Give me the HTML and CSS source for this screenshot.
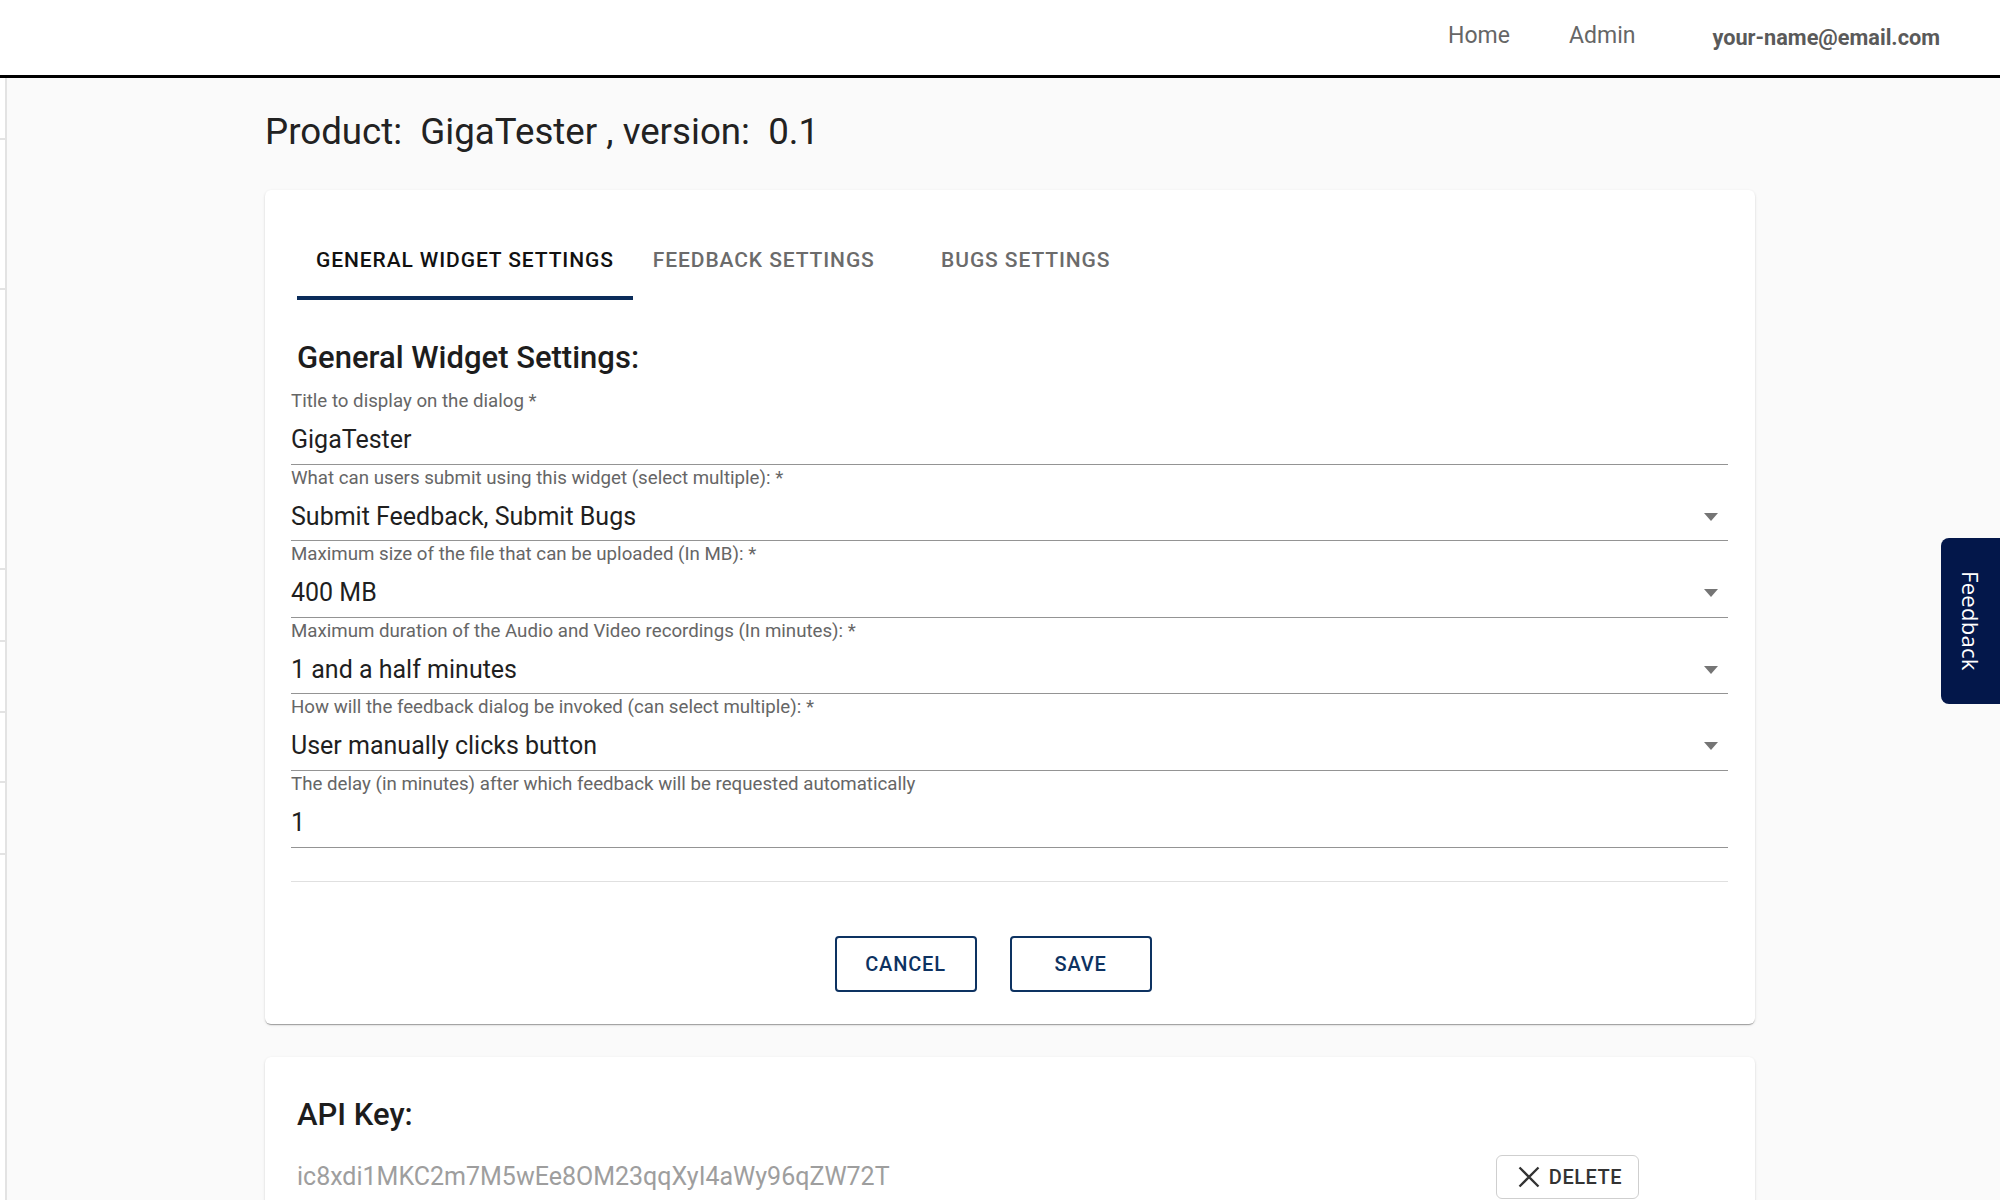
FILE: index.html
```html
<!DOCTYPE html>
<html lang="en">
<head>
<meta charset="utf-8">
<title>GigaTester - Product Settings</title>
<link rel="stylesheet" href="styles.css">
</head>
<body>
<header class="topbar">
  <nav class="nav">
    <a class="nav-link nav-home" href="#">Home</a>
    <a class="nav-link nav-admin" href="#">Admin</a>
    <span class="nav-user">your-name@email.com</span>
  </nav>
</header>
<div class="layout">
  <aside class="drawer">
    <div class="drawer-item d1"></div>
    <div class="drawer-item d2"></div>
    <div class="drawer-item d3"></div>
    <div class="drawer-item d4"></div>
    <div class="drawer-item d5"></div>
    <div class="drawer-item d6"></div>
    <div class="drawer-item d7"></div>
  </aside>
  <main class="main">
    <h1 class="page-title">Product:  GigaTester , version:  0.1</h1>
    <section class="card settings-card">
      <div class="tabs">
        <div class="tab tab-general active">General Widget Settings</div>
        <div class="tab tab-feedback">Feedback Settings</div>
        <div class="tab tab-bugs">Bugs Settings</div>
      </div>
      <h2 class="section-title">General Widget Settings:</h2>
      <div class="field">
        <div class="field-label">Title to display on the dialog *</div>
        <div class="field-value">GigaTester</div>
      </div>
      <div class="field select">
        <div class="field-label">What can users submit using this widget (select multiple): *</div>
        <div class="field-value">Submit Feedback, Submit Bugs<span class="caret"></span></div>
      </div>
      <div class="field select">
        <div class="field-label">Maximum size of the file that can be uploaded (In MB): *</div>
        <div class="field-value">400 MB<span class="caret"></span></div>
      </div>
      <div class="field select">
        <div class="field-label">Maximum duration of the Audio and Video recordings (In minutes): *</div>
        <div class="field-value">1 and a half minutes<span class="caret"></span></div>
      </div>
      <div class="field select">
        <div class="field-label">How will the feedback dialog be invoked (can select multiple): *</div>
        <div class="field-value">User manually clicks button<span class="caret"></span></div>
      </div>
      <div class="field">
        <div class="field-label">The delay (in minutes) after which feedback will be requested automatically</div>
        <div class="field-value">1</div>
      </div>
      <hr class="divider">
      <div class="actions">
        <button class="btn-outline">Cancel</button>
        <button class="btn-outline">Save</button>
      </div>
    </section>
    <section class="card api-card">
      <h2 class="api-title">API Key:</h2>
      <div class="api-row">
        <span class="api-key">ic8xdi1MKC2m7M5wEe8OM23qqXyI4aWy96qZW72T</span>
        <button class="btn-delete">
          <svg class="x-icon" viewBox="0 0 24 24" width="24" height="24"><path d="M2.5 2.5 L21.5 21.5 M21.5 2.5 L2.5 21.5" stroke="#333" stroke-width="2.3" fill="none"/></svg>
          <span>Delete</span>
        </button>
      </div>
    </section>
  </main>
</div>
<div class="feedback-tab"><span>Feedback</span></div>
</body>
</html>
```

FILE: styles.css
```css
* { box-sizing: border-box; }

html, body {
  margin: 0;
  padding: 0;
  background: #fafafa;
  font-family: Roboto, "Liberation Sans", Arial, sans-serif;
  color: rgba(0, 0, 0, 0.87);
}

.topbar {
  height: 78px;
  background: #ffffff;
  border-bottom: 3px solid #000000;
  display: flex;
  align-items: center;
  justify-content: flex-end;
}

.nav {
  display: flex;
  align-items: center;
  padding-right: 60px;
}

.nav-link {
  font-size: 23px;
  color: #666666;
  text-decoration: none;
  margin-bottom: 4px;
}

.nav-admin { margin-left: 59px; }

.nav-user {
  margin-left: 77px;
  font-size: 21.7px;
  font-weight: 700;
  color: #5a5a5a;
}

.layout {
  display: flex;
  align-items: flex-start;
}

.drawer {
  width: 7px;
  flex: none;
  background: #ffffff;
  border-right: 2px solid #e3e3e3;
  display: flex;
  flex-direction: column;
  min-height: 1122px;
}

.drawer-item { border-bottom: 2px solid #e3e3e3; }
.d1 { height: 62px; }
.d2 { height: 150px; }
.d3 { height: 280px; }
.d4 { height: 72px; }
.d5 { height: 71px; }
.d6 { height: 70px; }
.d7 { height: 72px; }

.main {
  flex: 1;
  padding-left: 258px;
}

.page-title {
  margin: 32px 0 0 0;
  font-size: 36.7px;
  line-height: 44px;
  font-weight: 400;
  color: #222222;
  white-space: pre;
}

.card {
  width: 1490px;
  background: #ffffff;
  border-radius: 6px;
  box-shadow: 0 2px 1px -1px rgba(0,0,0,0.2), 0 1px 1px 0 rgba(0,0,0,0.14), 0 1px 3px 0 rgba(0,0,0,0.12);
}

.settings-card {
  margin-top: 36px;
  padding: 32px 27px 32px 26px;
}

.tabs {
  display: flex;
  margin-left: 6px;
}

.tab {
  font-size: 21px;
  line-height: 24px;
  font-weight: 500;
  text-transform: uppercase;
  letter-spacing: 0.9px;
  color: #6b6b6b;
  padding: 26px 19px 24px 19px;
  border-bottom: 4px solid transparent;
  text-align: center;
  white-space: nowrap;
}

.tab.active {
  color: #111111;
  border-bottom-color: #0b2c5a;
}

.tab-feedback { padding-left: 20px; padding-right: 20px; }
.tab-bugs { min-width: 262px; }

.section-title {
  margin: 40px 0 0 6px;
  font-size: 31px;
  line-height: 36px;
  font-weight: 500;
  color: #1d1d1d;
}

.field {
  border-bottom: 1px solid #949494;
  padding-bottom: 8px;
}

.field + .field .field-label { margin-top: 3px; }

.section-title + .field .field-label { margin-top: 15px; }

.field-label {
  font-size: 18.7px;
  line-height: 20px;
  color: #666666;
}

.field-value {
  position: relative;
  margin-top: 13px;
  font-size: 25px;
  line-height: 31.6px;
  color: #1f1f1f;
}

.caret {
  position: absolute;
  right: 10px;
  top: 12px;
  width: 0;
  height: 0;
  border-left: 7.5px solid transparent;
  border-right: 7.5px solid transparent;
  border-top: 8px solid #757575;
}

.divider {
  margin: 33px 0 0 0;
  border: 0;
  border-top: 1px solid #e0e0e0;
  height: 0;
}

.actions {
  display: flex;
  justify-content: center;
  margin-top: 54px;
}

.btn-outline {
  width: 142px;
  height: 56px;
  margin-right: 33px;
  background: #ffffff;
  border: 2px solid #0d3261;
  border-radius: 4px;
  color: #0d3261;
  font-family: Roboto, "Liberation Sans", Arial, sans-serif;
  font-size: 20px;
  font-weight: 500;
  letter-spacing: 0.8px;
  text-transform: uppercase;
  padding: 0;
}

.api-card {
  margin-top: 33px;
  padding: 40px 32px 60px 32px;
}

.api-title {
  margin: 0;
  font-size: 31px;
  line-height: 36px;
  font-weight: 500;
  color: #1d1d1d;
}

.api-row {
  display: flex;
  align-items: center;
  justify-content: space-between;
  margin-top: 22px;
  padding-right: 86px;
}

.api-key {
  font-size: 25px;
  line-height: 44px;
  color: #9e9e9e;
}

.btn-delete {
  display: flex;
  align-items: center;
  gap: 8px;
  height: 44px;
  padding: 0 16px 0 20px;
  margin-right: -2px;
  background: #ffffff;
  border: 1px solid #cfcfcf;
  border-radius: 6px;
  font-family: Roboto, "Liberation Sans", Arial, sans-serif;
  font-size: 20px;
  font-weight: 500;
  letter-spacing: 0.5px;
  text-transform: uppercase;
  color: #333333;
}

.x-icon { flex: none; }

.feedback-tab {
  position: fixed;
  right: 0;
  top: 538px;
  width: 59px;
  height: 166px;
  background: #03174a;
  border-radius: 8px 0 0 8px;
  display: flex;
  align-items: center;
  justify-content: center;
}

.feedback-tab span {
  writing-mode: vertical-rl;
  color: #ffffff;
  font-family: "Open Sans", "Noto Sans", sans-serif;
  font-size: 22px;
  letter-spacing: 0.3px;
}
```
